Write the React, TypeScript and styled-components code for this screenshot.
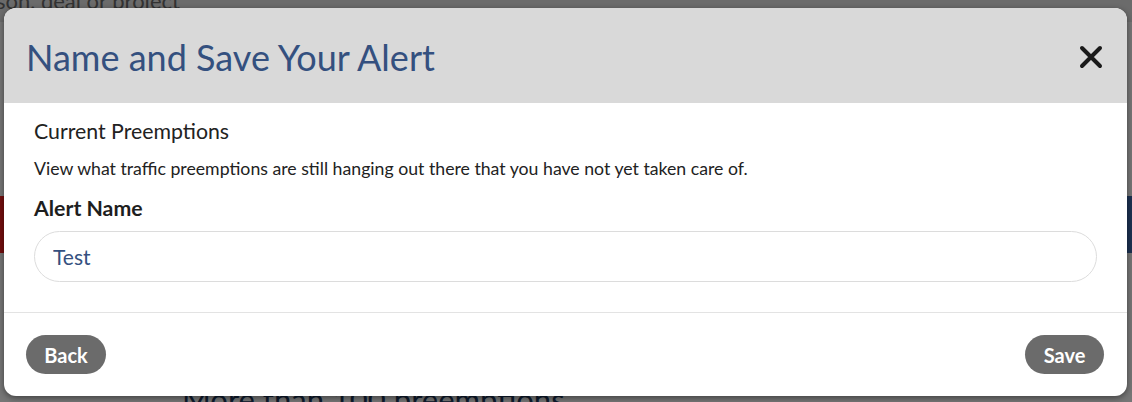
import React from "react";
import styled, { createGlobalStyle } from "styled-components";

const Global = createGlobalStyle`
  html, body { margin: 0; padding: 0; }
  body { font-family: Lato, "Noto Sans", sans-serif; background: #fff; }
  * { box-sizing: border-box; }
`;

const Page = styled.div`
  position: relative;
  width: 1132px;
  height: 402px;
  overflow: hidden;
  background: #fbfbfb;
`;

const SearchStrip = styled.div`
  height: 22px;
  background: #e4e4e4;
  color: #6a6a6a;
  font-size: 22px;
  line-height: 18px;
  overflow: hidden;
  span { display: block; margin-left: -4px; margin-top: -8px; }
`;

const Spacer = styled.div<{ $h: number }>`
  height: ${(p) => p.$h}px;
`;

const Band = styled.div`
  height: 57px;
  display: flex;
  justify-content: space-between;
  background: #fbfbfb;
`;

const BandSide = styled.div<{ $c: string }>`
  width: 40px;
  background: ${(p) => p.$c};
`;

const BigLine = styled.div`
  padding-left: 182px;
  font-size: 31px;
  color: #1f3a60;
  line-height: 40px;
`;

const Overlay = styled.div`
  position: absolute;
  inset: 0;
  background: rgba(0, 0, 0, 0.53);
  padding: 8px 5px 6px 4px;
  display: flex;
`;

const Modal = styled.div`
  flex: 1;
  background: #fff;
  border-radius: 12px;
  overflow: hidden;
  display: flex;
  flex-direction: column;
  box-shadow: 0 2px 6px rgba(0, 0, 0, 0.45);
`;

const Header = styled.div`
  height: 95px;
  background: #d9d9d9;
  display: flex;
  align-items: center;
  justify-content: space-between;
  padding: 0 24px 0 22px;
`;

const Title = styled.h2`
  margin: 0;
  font-weight: 400;
  font-size: 36px;
  color: #34507f;
  line-height: 42px;
  margin-top: 2px;
`;

const CloseBtn = styled.button`
  border: 0;
  background: none;
  padding: 0;
  width: 24px;
  height: 24px;
  display: flex;
  cursor: pointer;
  margin-top: 2px;
`;

const Body = styled.div`
  padding: 16px 30px 30px 30px;
  border-bottom: 1px solid #e3e3e3;
  display: flex;
  flex-direction: column;
`;

const Subtitle = styled.div`
  font-size: 21.3px;
  line-height: 24px;
  color: #222;
`;

const Description = styled.p`
  margin: 16px 0 0;
  font-size: 17.7px;
  line-height: 20px;
  color: #222;
`;

const Label = styled.label`
  margin-top: 17px;
  font-size: 21.3px;
  line-height: 24px;
  font-weight: 700;
  color: #1e1e1e;
`;

const Input = styled.input`
  margin-top: 11px;
  height: 51px;
  border: 1px solid #dcdcdc;
  border-radius: 26px;
  padding: 0 18px;
  font-family: Lato, "Noto Sans", sans-serif;
  font-size: 21px;
  color: #34507f;
  outline: none;
`;

const Footer = styled.div`
  flex: 1;
  display: flex;
  justify-content: space-between;
  align-items: center;
  padding: 0 23px 0 22px;
`;

const PillButton = styled.button<{ $w: number }>`
  width: ${(p) => p.$w}px;
  height: 39px;
  border: 0;
  border-radius: 20px;
  background: #6b6b6b;
  color: #fff;
  font-family: Lato, "Noto Sans", sans-serif;
  font-size: 20px;
  font-weight: 700;
  cursor: pointer;
  padding: 0;
`;

export default function App() {
  return (
    <>
      <Global />
      <Page>
        <SearchStrip>
          <span>son, deal or project</span>
        </SearchStrip>
        <Spacer $h={174} />
        <Band>
          <BandSide $c="#f41f1f" />
          <BandSide $c="#3c68ad" />
        </Band>
        <Spacer $h={126} />
        <BigLine>More than 100 preemptions</BigLine>
        <Overlay>
          <Modal>
            <Header>
              <Title>Name and Save Your Alert</Title>
              <CloseBtn aria-label="Close">
                <svg width="24" height="24" viewBox="0 0 24 24">
                  <path
                    d="M3 3L21 21M21 3L3 21"
                    stroke="#1a1a1a"
                    strokeWidth="4"
                    strokeLinecap="round"
                  />
                </svg>
              </CloseBtn>
            </Header>
            <Body>
              <Subtitle>Current Preemptions</Subtitle>
              <Description>
                View what traffic preemptions are still hanging out there that you have not yet taken care of.
              </Description>
              <Label htmlFor="alert-name">Alert Name</Label>
              <Input id="alert-name" defaultValue="Test" />
            </Body>
            <Footer>
              <PillButton $w={80}>Back</PillButton>
              <PillButton $w={79}>Save</PillButton>
            </Footer>
          </Modal>
        </Overlay>
      </Page>
    </>
  );
}
